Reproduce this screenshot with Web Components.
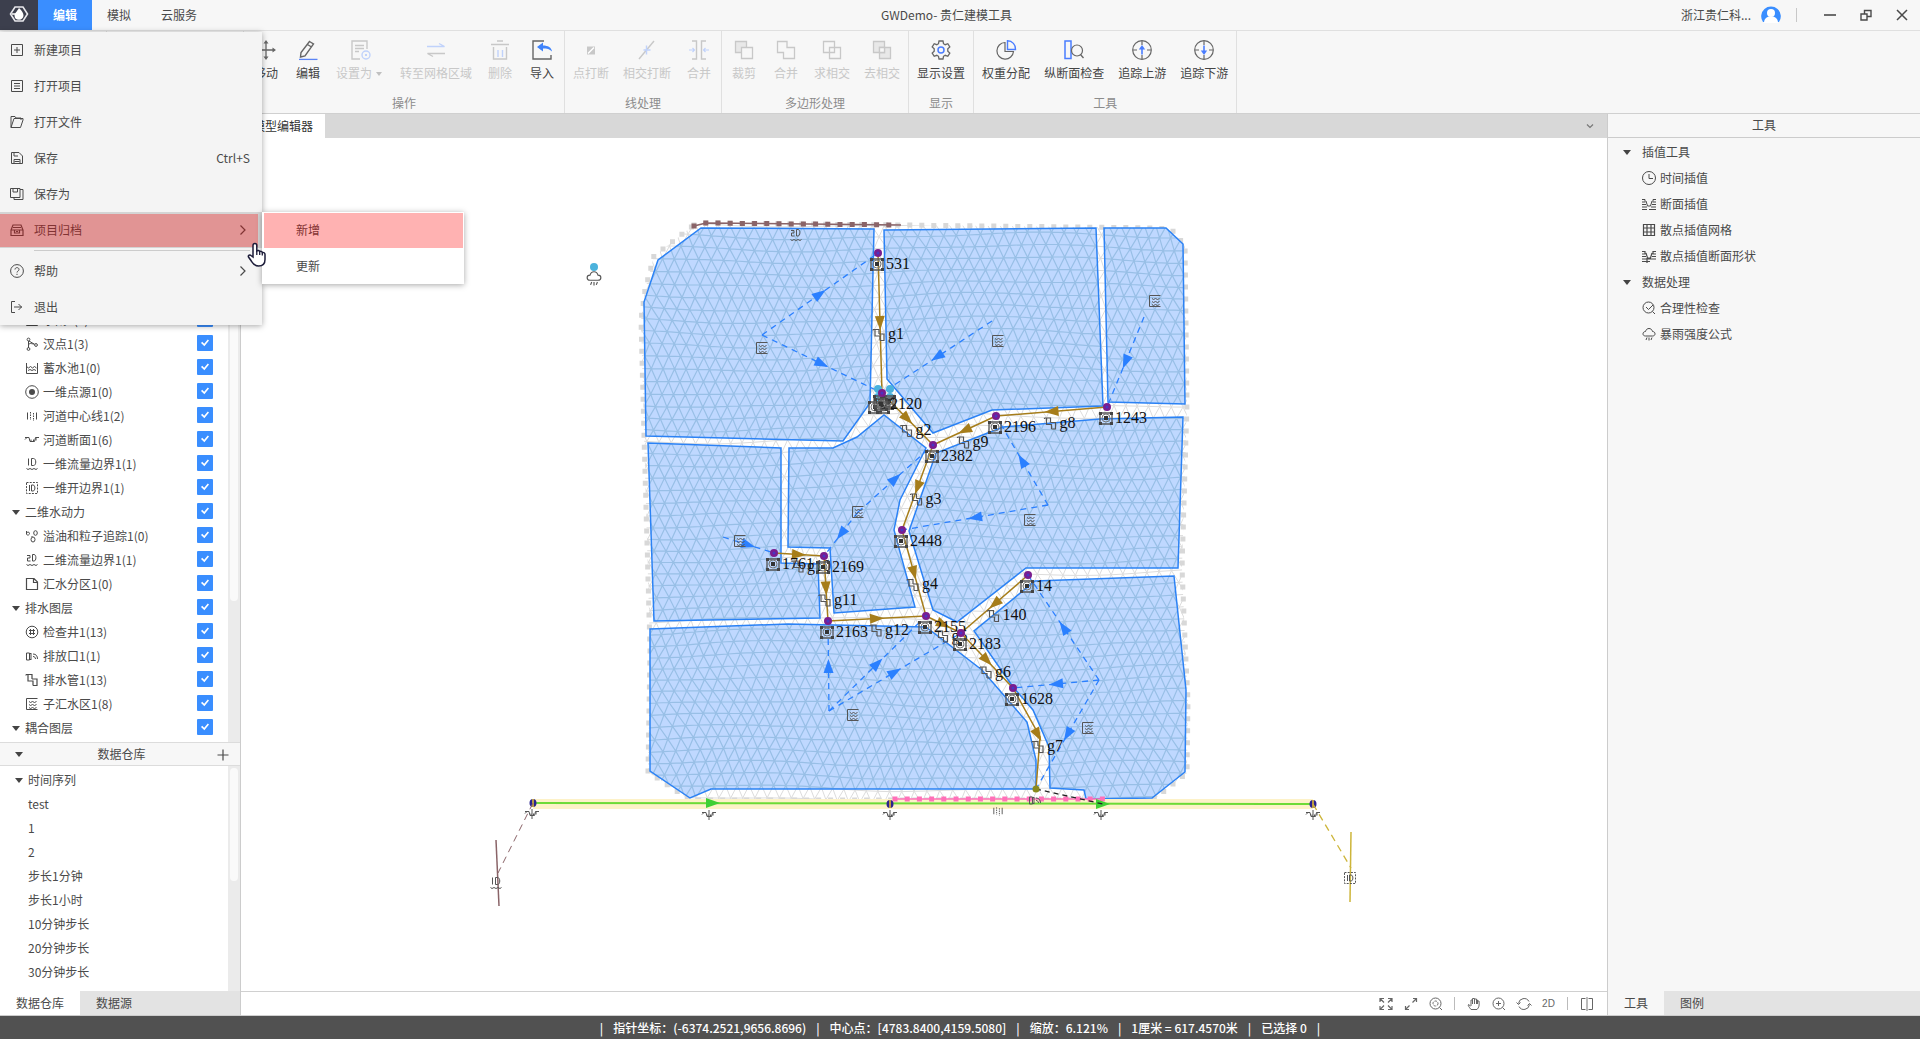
<!DOCTYPE html>
<html lang="zh-CN">
<head>
<meta charset="utf-8">
<title>GWDemo- 贵仁建模工具</title>
<style>
  html, body {
    height: 100%;
    margin: 0;
  }

  body {
    font: 12px/16px "Noto Sans CJK SC", sans-serif;
    color: #4a4a4a;
    overflow: hidden;
  }
</style>
</head>
<body>
<gw-app></gw-app>

<script>
// ---------- icons ----------

// Inner markup of every icon, drawn on a square view box of the given size
const ICONS = {
  logo: [20, '<path d="M6 3h8l4.500 7-4.500 7H6L1.500 10z" stroke="#e8e8ec" stroke-width="1.600"/><path d="M10 4c3 3 4.500 5 4.500 7.500a4.300 4.300 0 0 1-4.500 4.300 4.500 4.500 0 0 1-4.500-4.300C5.500 9.500 8 7.500 10 4z" fill="#fff" stroke="none"/><path d="M3 10h5l2 3" stroke="#fff" stroke-width="1.500"/>'],
  user: [20, '<path d="M2 17A9.800 9.800 0 1 1 18 17z" fill="#3a8eff" stroke="none"/><circle cx="10" cy="8" r="4" fill="#fff" stroke="none"/><path d="M3 18c0-4 2.500-6 5-6.500h4c2.500.5 5 2.500 5 6.500z" fill="#fff" stroke="none"/>'],
  min: [14, '<path d="M1 7h12" stroke-width="1.600"/>'],
  restore: [14, '<path d="M2 6h6v6H2zM5.500 6V2.500H12v6H8" stroke-width="1.400"/>'],
  close: [14, '<path d="M2 2l10 10M12 2L2 12" stroke-width="1.500"/>'],

  move: [20, '<path d="M10 2v16M2 10h16" stroke-width="1.300"/><path d="M10 0l2.500 3.500h-5zM10 20l-2.500-3.500h5zM0 10l3.500-2.500v5zM20 10l-3.500 2.500v-5z" fill="currentColor" stroke="none"/>'],
  edit: [20, '<path d="M11.500 1.500l4 2.500L7 16l-4.500 1 .5-4.500zM9.500 4.500l4 2.500" stroke-width="1.400"/><path d="M1 19.400h18.500" stroke="#5b84f5" stroke-width="1.300"/>'],
  setas: [20, '<path d="M16 9V1H1v18h8M4 5.500h9M4 8.500h9M4 11.500h4" stroke-width="1.400"/><circle cx="15" cy="15" r="4" stroke="#c0d2fb" stroke-width="1.400"/><path d="M15 14v2" stroke="#c0d2fb" stroke-width="2"/>'],
  swap: [20, '<path d="M1 6.500h17.500L13 3.500" stroke="#c0d2fb" stroke-width="1.400"/><path d="M19 13.500H1.500L7 16.500" stroke-width="1.400"/>'],
  trash: [20, '<path d="M1 4.500h18M7 1h6M3.500 7v12h13V7" stroke-width="1.400"/><path d="M8 10v7M12.500 10v7" stroke="#c0d2fb" stroke-width="1.400"/>'],
  import: [20, '<path d="M12 1H1v18h18v-4" stroke-width="1.400"/><path d="M11 2.500L5 7l6 4.500V8.500c4 0 6.500.5 9 3-.5-4-4-6-9-6z" fill="#3f83fb" stroke="none"/>'],
  breakpt: [20, '<path d="M6 6.500h8v8H6z" fill="currentColor" stroke="none"/><path d="M7 13.500l6-6" stroke="#fff" stroke-width="1.500"/>'],
  breakx: [20, '<path d="M2 19L17 1" stroke-width="1.400"/><path d="M9.500 5.500v9M6.500 10h7" stroke="#c0d2fb" stroke-width="1.400"/>'],
  merge: [20, '<path d="M3 1h4.500v18H3M17 1h-4.500v18H17" stroke-width="1.400"/><path d="M0 10h5.500M3.500 8l2 2-2 2M20 10h-5.500M16.500 8l-2 2 2 2" stroke="#c0d2fb" stroke-width="1.200"/>'],
  cut: [20, '<path d="M1.500 1.500h11v11h-11z" fill="#e8e8e8" stroke-width="1.300"/><path d="M7.500 7.500h11v11h-11z" fill="#f7f7f7" stroke-width="1.300"/>'],
  union: [20, '<path d="M1.500 1.500h9.500v6h7.500v11H7.500v-6h-6z" stroke-width="1.300"/>'],
  intersect: [20, '<path d="M1.500 1.500h11v11h-11zM7.500 7.500h11v11h-11z" stroke-width="1.300"/>'],
  subtract: [20, '<path d="M1.500 1.500h11v11h-11zM7.500 7.500h11v11h-11z" fill="#e8e8e8" stroke-width="1.300"/><path d="M7.500 7.500h5v5h-5z" fill="#f7f7f7" stroke-width="1.300"/>'],
  gear: [20, '<path d="M8 1h4l.5 2.700 1.700 1 2.600-1 2 3.300-2 1.800v2.400l2 1.800-2 3.300-2.600-1-1.700 1L12 19H8l-.5-2.700-1.700-1-2.600 1-2-3.300 2-1.800V8.800l-2-1.800 2-3.300 2.600 1 1.700-1z" stroke-width="1.300"/><circle cx="10" cy="10" r="3" stroke="#4a7dff" stroke-width="1.500"/>'],
  pie: [20, '<path d="M9 2.500A8.300 8.300 0 1 0 17.500 11.500H9z" stroke-width="1.200"/><path d="M11.500.8v8.700h8A8 8 0 0 0 11.500.8z" stroke="#4a7dff" stroke-width="1.400"/>'],
  section: [20, '<path d="M1 1h6v17.500H1z" stroke="#4a7dff" stroke-width="1.500"/><circle cx="13" cy="10.500" r="5.500" stroke-width="1.200"/><path d="M16.500 14.500L19.500 18" stroke-width="1.300"/>'],
  up: [20, '<circle cx="10" cy="10" r="9.300" stroke-width="1.200"/><path d="M10 1v4M10 15v4M1 10h4M15 10h4" stroke-width="1.200"/><path d="M10 14.500V7" stroke="#4a7dff" stroke-width="1.600"/><path d="M10 5l3.200 4.500H6.800z" fill="#4a7dff" stroke="none"/>'],
  down: [20, '<circle cx="10" cy="10" r="9.300" stroke-width="1.200"/><path d="M10 1v4M10 15v4M1 10h4M15 10h4" stroke-width="1.200"/><path d="M10 5.500V13" stroke="#4a7dff" stroke-width="1.600"/><path d="M10 15l3.200-4.500H6.800z" fill="#4a7dff" stroke="none"/>'],

  add: [14, '<path d="M1.500 1.500h11v11h-11zM7 4v6M4 7h6"/>'],
  list: [14, '<path d="M1.500 1.500h11v11h-11zM4 4.500h6M4 7h6M4 9.500h6"/>'],
  folder: [14, '<path d="M1 12.500V1.500h4l1 1.500h5v2M1 12.500h9.500L13 5V3.500H4L1 12.500"/>'],
  save: [14, '<path d="M1.500 1.500H9l3.500 3.500v7.500h-11zM4 1.500V5h4M4 12.500V8.500h6v4M4.500 10.500h5"/>'],
  saveas: [14, '<path d="M.5 1.500h9.500v9H.5zM3 1.500V5h4.500V1.500M10 2.500h3v10H4v-2"/>'],
  archive: [14, '<path d="M1 12.500V7l2-5h8l2 5v5.500zM1 7h12M3 4.500h8M4.500 7v3h5V7M6 8.500h2" stroke-width="1.200"/>'],
  help: [14, '<circle cx="7" cy="7" r="6.400"/><path d="M5 5.500C5 3 9 3 9 5.500 9 7 7 7 7 8.500M7 9.800v1.200"/>'],
  exit: [14, '<path d="M5 1.500H1.500v11H5M4 7h8M8.500 4l3 3-3 3"/>'],
  right: [14, '<path d="M4.500 2.500L9 7l-4.500 4.500" stroke-width="1.200"/>'],
  chevron: [14, '<path d="M4 5.500l3 3 3-3" stroke-width="1.200"/>'],
  plus: [14, '<path d="M7 1.500v11M1.500 7h11" stroke-width="1.200"/>'],

  branch: [14, '<path d="M3.500 4v7M3.500 9c0-4 3-2 6-2M4 4l5 3"/><circle cx="3.500" cy="2.500" r="1.400"/><circle cx="3.500" cy="12" r="1.400"/><circle cx="11" cy="8" r="1.400"/>'],
  pool: [14, '<path d="M1.500 2v10.500h11V2M1.500 5.500l2 1.500 2-1.500 2 1.500 2-1.500 2 1.500M3 9.500l2-1 2 1 2-1 2 1"/>'],
  source: [14, '<circle cx="7" cy="7" r="6.300"/><circle cx="7" cy="7" r="3" fill="currentColor" stroke="none"/>'],
  centre: [14, '<path d="M2.500 3.500v7M11.500 3.500v7"/><path d="M5.500 3v8M8.500 4v8" stroke-dasharray="1.500 1"/>'],
  cross: [14, '<path d="M0 6.500L2 4.500h2l1 4h4.500l1-4H13M0 4.500h2M11 7.500v-3M14 4.500h-2M6 6.500v2M8.500 6.500v2"/>'],
  flow1: [14, '<path d="M3.500 1.500v7M6.500 1.500h2c3 0 3 7 0 7h-2zM1.500 11.500l1.500 1 2-1 2 1 2-1 2 1 1.500-1"/>'],
  open1: [14, '<path d="M1.500 1.500h11v11h-11z" stroke-dasharray="2 1.200"/><path d="M4.500 4v6M6.500 4h1.500c2.500 0 2.500 6 0 6H6.500z"/>'],
  oil: [14, '<path d="M1.500 2v3c0 1.500 3 1.500 3-.5S2 3 1.500 4"/><ellipse cx="10.500" cy="4" rx="1.800" ry="2.300"/><ellipse cx="8" cy="10.500" rx="2" ry="2.500"/><path d="M6.500 8l1-1"/>'],
  flow2: [14, '<path d="M2 2.500h3v2.500H2.500v3H5.500M7.500 1.500h1.500c2.500 0 2.500 6.500 0 6.500H7.500zM1.500 11.500l1.500 1 2-1 2 1 2-1 2 1 1.500-1"/>'],
  page: [14, '<path d="M1.500 1.500h7.500L12.500 5v7.500h-11zM8.500 1.500V5.500h4" stroke-width="1.200"/>'],
  well: [14, '<circle cx="7" cy="7" r="5.800"/><path d="M5.500 4v6M8.500 4v6M4 5.500h6M4 8.500h6"/>'],
  outlet: [14, '<path d="M1.500 4h3v7h-3zM4.500 5.500l1.500-1.500v7L4.500 9.500M8 5c3 0 4.500 2 4.500 5M8 7.500c1.500 0 2.500 1 2.500 2.500"/>'],
  pipe: [14, '<path d="M1 1.500h6V6M3 1.500v6.500h5v4.500M7 6h5v6.500H8M1 1.500v1" stroke-width="1.200"/>'],
  catchment: [14, '<path d="M12.500 1.500h-11v11h11M4 4.500l1.500 1 2-1 2 1 2-1M4 7.500l1.500 1 2-1 2 1 2-1M4 10.500l1.500 1 2-1 2 1 2-1"/>'],

  clock: [14, '<circle cx="7" cy="7" r="6.500"/><path d="M7 3v4.500h4"/>'],
  profile: [14, '<path d="M0 2.500h3v2M14 2.500h-3v2M0 5h3.500M0 7.500h4M0 10h5M14 5h-3.500M14 7.500h-4M14 10H9M4 4l1.500 5h3L10 4M0 12.500h5M7 12.500h7"/>'],
  grid: [14, '<path d="M1.500 1.500h11v11h-11zM5 1.500v11M9 1.500v11M1.500 5h11M1.500 9h11" stroke-width="1.200"/>'],
  shape: [14, '<path d="M0 2.500h3v2M14 2.500h-3v2M0 5h3.500M0 7.500h4M0 10h14M14 5h-3.500M14 7.500h-4M4 4l1.500 5h3L10 4M0 12.500h8M5 9v5" stroke-width="1.200"/>'],
  check: [14, '<circle cx="6.500" cy="6.500" r="5.500"/><path d="M4 6l2.500 2.500L11 4M10.500 10.500L13 13"/>'],
  rain: [14, '<path d="M3.500 9C1.800 9 1 8 1 6.800S2 4.500 3.500 4.500C4 2.500 5.300 1.500 7 1.500s3 1 3.500 3c1.500 0 2.500 1 2.500 2.300S12.200 9 10.500 9zM5 10.500L4 13M7 10.500v3M10 10.500L9 13"/>'],

  full: [14, '<path d="M1 5V1.500h4M9 1.500h4V5M13 9v3.500H9M5 12.500H1V9M1.500 2L5 5.500M12.500 2L9 5.500M12.500 12L9 8.500M1.500 12L5 8.500" stroke-width="1.200"/>'],
  extent: [14, '<path d="M9 1.500h3.500V5M12.500 1.500L8.500 5.500M1.500 9v3.500H5M1.500 12.500l4-4" stroke-width="1.200"/>'],
  zoomall: [14, '<circle cx="6.500" cy="6.500" r="5.500"/><circle cx="6.500" cy="6.500" r="2.500" stroke-dasharray="2.500 1"/><path d="M10.500 10.500L13 13"/>'],
  hand: [14, '<path d="M3.500 9L1.500 7.500C.5 8 2 10 4 12.500h6c2-2 2.500-4 2-8.500h-1.500v3M4 9V3h1.500v4M5.500 3V1.500H7.500V7M7.500 2h2v5M9.500 3h1v4"/>'],
  zoomin: [14, '<circle cx="6.500" cy="6.500" r="5.500"/><path d="M6.500 4v5M4 6.500h5M10.500 10.500L13 13"/>'],
  refresh: [14, '<path d="M1.500 6.500a5.600 5.600 0 0 1 10.500-2M12.500 7.500a5.600 5.600 0 0 1-10.500 2M-.5 5.500l2 2 2-2M10.500 8.500l2-2 2 2"/>'],
  split: [14, '<path d="M5.500 1.500h-4v11h4M8.500 1.500h4v11h-4"/><path d="M7 0v14" stroke="#bbb" stroke-width="2"/>']
};

class GwIcon extends HTMLElement {
  constructor() {
    super();
    this.attachShadow({ mode: 'open' });
  }

  connectedCallback() {
    const [box, body] = ICONS[this.getAttribute('name')];
    const size = this.getAttribute('size') || box;

    this.shadowRoot.innerHTML = /*html*/`
      <style>
        :host { display: inline-flex; flex: none; }
        svg { display: block; overflow: visible; }
      </style>
      <svg width="${size}" height="${size}" viewBox="0 0 ${box} ${box}" fill="none" stroke="currentColor" stroke-width="1" aria-hidden="true">${body}</svg>
    `;
  }
}

customElements.define('gw-icon', GwIcon);

// ---------- title bar ----------

class GwTitleBar extends HTMLElement {
  constructor() {
    super();
    this.attachShadow({ mode: 'open' });
    this.shadowRoot.innerHTML = /*html*/`
      <style>
        :host {
          display: flex;
          height: 30px;
          background: #f7f7f7;
          border-bottom: 1px solid #e0e0e0;
        }
        button {
          font: inherit;
          color: inherit;
          background: none;
          border: 0;
          padding: 0 15px;
        }
        nav { display: flex; }
        .logo { width: 38px; padding: 0 9px; background: #3c3f4d; }
        .active { color: #fff; font-weight: 700; background: #3a8eff; }
        h1 {
          flex: 1;
          margin: 0;
          font: inherit;
          line-height: 30px;
          text-align: center;
        }
        .account { display: flex; align-items: center; gap: 10px; padding-right: 15px; }
        .account::after { content: ""; width: 1px; height: 14px; margin-left: 5px; background: #c8c8c8; }
        .win { display: flex; }
        .win button { display: grid; place-items: center; width: 36px; padding: 0; }
      </style>
      <nav>
        <button class="logo" aria-label="菜单"><gw-icon name="logo"></gw-icon></button>
        <button class="active">编辑</button>
        <button>模拟</button>
        <button>云服务</button>
      </nav>
      <h1>GWDemo- 贵仁建模工具</h1>
      <div class="account"><span>浙江贵仁科...</span><gw-icon name="user"></gw-icon></div>
      <div class="win">
        <button aria-label="最小化"><gw-icon name="min"></gw-icon></button>
        <button aria-label="还原"><gw-icon name="restore"></gw-icon></button>
        <button aria-label="关闭"><gw-icon name="close"></gw-icon></button>
      </div>
    `;
  }
}

customElements.define('gw-title-bar', GwTitleBar);

// ---------- ribbon ----------

class RibbonGroup extends HTMLElement {
  constructor() {
    super();
    this.attachShadow({ mode: 'open' });
    this.shadowRoot.innerHTML = /*html*/`
      <style>
        :host {
          display: flex;
          flex-direction: column;
          justify-content: space-between;
          box-sizing: border-box;
          padding: 9px 1px 2px;
          border-right: 1px solid #e0e0e0;
        }
        .items { display: flex; }
        .label { color: #8c8c8c; text-align: center; }
      </style>
      <div class="items"><slot></slot></div>
      <div class="label">${this.getAttribute('label') || ''}</div>
    `;
  }
}

customElements.define('ribbon-group', RibbonGroup);

class RibbonButton extends HTMLElement {
  constructor() {
    super();
    const off = this.hasAttribute('off');

    this.attachShadow({ mode: 'open' });
    this.shadowRoot.innerHTML = /*html*/`
      <style>
        :host { display: block; }
        button {
          display: flex;
          flex-direction: column;
          align-items: center;
          gap: 5px;
          min-width: 42px;
          padding: 0 7px;
          font: inherit;
          color: #444;
          background: none;
          border: 0;
          white-space: nowrap;
        }
        gw-icon { color: #666; }
        button:disabled, button:disabled gw-icon { color: #c8c8c8; }
        .drop::after {
          content: "";
          display: inline-block;
          margin: 0 4px 2px;
          border: 3px solid transparent;
          border-top: 4px solid #c0c0c0;
          border-bottom: 0;
        }
      </style>
      <button ${off ? 'disabled' : ''}>
        <gw-icon name="${this.getAttribute('icon')}"></gw-icon>
        <span class="${this.hasAttribute('drop') ? 'drop' : ''}"><slot></slot></span>
      </button>
    `;
  }
}

customElements.define('ribbon-button', RibbonButton);

// ---------- application menu ----------

class MenuItem extends HTMLElement {
  constructor() {
    super();
    const icon = this.getAttribute('icon');
    const key = this.getAttribute('key');

    this.attachShadow({ mode: 'open' });
    this.shadowRoot.innerHTML = /*html*/`
      <style>
        :host { display: block; position: relative; }
        button {
          display: flex;
          align-items: center;
          gap: 10px;
          width: 100%;
          height: 36px;
          padding: 0 12px 0 10px;
          font: inherit;
          color: inherit;
          text-align: left;
          background: none;
          border: 0;
        }
        :host(:not([icon])) button { padding-left: 34px; }
        .text { flex: 1; }
        :host([open]) button { background: #d4d4d4; }
        :host([marked])::after {
          content: "";
          position: absolute;
          inset: 1px 1px 0 2px;
          background: rgba(255, 0, 0, .3);
          pointer-events: none;
        }
        :host([open])::after { inset: 2px 4px 1px 0; }
      </style>
      <button>
        ${icon ? `<gw-icon name="${icon}"></gw-icon>` : ''}
        <span class="text"><slot></slot></span>
        ${key ? `<kbd style="font: inherit">${key}</kbd>` : ''}
        ${this.hasAttribute('more') ? '<gw-icon name="right"></gw-icon>' : ''}
      </button>
      <slot name="sub"></slot>
    `;
  }
}

customElements.define('menu-item', MenuItem);

class AppMenu extends HTMLElement {
  constructor() {
    super();
    this.attachShadow({ mode: 'open' });
    this.shadowRoot.innerHTML = /*html*/`
      <style>
        :host {
          display: block;
          width: 262px;
          background: #f4f4f4;
          box-shadow: 0 1px 6px rgba(0, 0, 0, .35);
        }
        hr { margin: 2px 12px 2px 34px; border: 0; border-top: 1px solid #ccc; }
        .sub {
          position: absolute;
          left: 100%;
          top: 0;
          width: 202px;
          background: #fff;
          box-shadow: 0 1px 6px rgba(0, 0, 0, .35);
        }
        .cursor { position: absolute; left: 247px; top: 210px; }
      </style>
      <menu-item icon="add">新建项目</menu-item>
      <menu-item icon="list">打开项目</menu-item>
      <menu-item icon="folder">打开文件</menu-item>
      <menu-item icon="save" key="Ctrl+S">保存</menu-item>
      <menu-item icon="saveas">保存为</menu-item>
      <menu-item icon="archive" more open marked>项目归档
        <div class="sub" slot="sub">
          <menu-item marked>新增</menu-item>
          <menu-item>更新</menu-item>
        </div>
      </menu-item>
      <hr>
      <menu-item icon="help" more>帮助</menu-item>
      <menu-item icon="exit">退出</menu-item>
      <svg class="cursor" width="20" height="26" viewBox="0 0 20 26" aria-hidden="true">
        <path d="M6 15V3.500a1.900 1.900 0 0 1 3.800 0V9c1-.8 2.500-.5 2.900.6 1-.6 2.300-.2 2.600.9 1.400-.4 2.700.4 2.700 2v5c0 4-2.500 6.500-6.500 6.500-4.500 0-5.500-2.500-7.500-5.500l-2.500-3.500c-.7-1.500 1.300-2.700 2.500-1.500z" fill="#fff" stroke="#1d1d3a" stroke-width="1.500"/>
        <path d="M9.800 9v4M12.700 9.600V13M15.300 10.500V13.500" stroke="#1d1d3a" stroke-width="1.300"/>
      </svg>
    `;
  }
}

customElements.define('app-menu', AppMenu);

// ---------- trees and panes ----------

class TreeRow extends HTMLElement {
  constructor() {
    super();
    const icon = this.getAttribute('icon');
    const group = this.hasAttribute('group');
    const check = this.hasAttribute('check');
    const tag = check ? 'label' : 'div';

    this.attachShadow({ mode: 'open' });
    this.shadowRoot.innerHTML = /*html*/`
      <style>
        :host { display: block; white-space: nowrap; }
        .row {
          display: flex;
          align-items: center;
          height: var(--row, 24px);
          padding-left: var(--indent, 25px);
          gap: 4px;
        }
        :host([group]) .row { padding-left: var(--fold, 12px); gap: var(--fold-gap, 5px); }
        .fold { border: 4px solid transparent; border-top: 5px solid #444; border-bottom: 0; }
        .text { flex: 1; }
        input {
          appearance: none;
          display: grid;
          place-items: center;
          width: 16px;
          height: 16px;
          margin: 0 27px 2px 0;
          background: #3a8eff;
          border-radius: 1px;
        }
        input::before {
          content: "";
          width: 8px;
          height: 8px;
          background: #fff;
          clip-path: polygon(0 50%, 15% 35%, 40% 58%, 85% 5%, 100% 20%, 42% 92%);
        }
      </style>
      <${tag} class="row">
        ${group ? '<span class="fold"></span>' : ''}
        ${icon ? `<gw-icon name="${icon}"></gw-icon>` : ''}
        <span class="text"><slot></slot></span>
        ${check ? '<input type="checkbox" checked>' : ''}
      </${tag}>
    `;
  }
}

customElements.define('tree-row', TreeRow);

// Row of tabs under a side panel
class PaneTabs extends HTMLElement {
  constructor() {
    super();
    const [active, other] = this.getAttribute('tabs').split(',');

    this.attachShadow({ mode: 'open' });
    this.shadowRoot.innerHTML = /*html*/`
      <style>
        :host { display: flex; height: 24px; background: #e3e3e3; border-bottom: 1px solid #ccc; }
        button { padding: 0 16px; font: inherit; color: inherit; background: none; border: 0; }
        .active { background: var(--tab, #fff); }
      </style>
      <button class="active">${active}</button>
      <button>${other}</button>
    `;
  }
}

customElements.define('pane-tabs', PaneTabs);

class LeftPanel extends HTMLElement {
  constructor() {
    super();
    this.attachShadow({ mode: 'open' });
    this.shadowRoot.innerHTML = /*html*/`
      <style>
        :host {
          display: flex;
          flex-direction: column;
          width: 240px;
          background: #fff;
          border-right: 1px solid #ccc;
        }
        .scroll { display: flex; min-height: 0; overflow: hidden; }
        .rows { flex: 1; min-width: 0; }
        .layers { flex: 1; }
        .layers .rows { display: flex; flex-direction: column; justify-content: flex-end; padding-bottom: 2px; margin-right: -12px; }
        .store { height: 225px; }
        .store .rows { padding-top: 2px; --indent: 28px; --fold: 15px; }
        .track { width: 12px; background: #ebebeb; z-index: 1; }
        .track i { display: block; width: 8px; height: 113px; margin: 2px; border-radius: 4px; background: #fafafa; }
        .layers .track i { height: 485px; }
        header {
          display: flex;
          align-items: center;
          height: 22px;
          padding: 0 10px 0 15px;
          background: #f7f7f7;
          border: solid #dcdcdc;
          border-width: 1px 0;
        }
        header .fold { border: 4px solid transparent; border-top: 5px solid #444; border-bottom: 0; }
        h2 { flex: 1; margin: 0; padding-left: 4px; font: inherit; text-align: center; }
        header button { padding: 0; color: inherit; background: none; border: 0; }
        header gw-icon { vertical-align: middle; }
      </style>
      <div class="scroll layers">
        <div class="rows">
          <tree-row check icon="pool">水闸1(0)</tree-row>
          <tree-row check icon="branch">汊点1(3)</tree-row>
          <tree-row check icon="pool">蓄水池1(0)</tree-row>
          <tree-row check icon="source">一维点源1(0)</tree-row>
          <tree-row check icon="centre">河道中心线1(2)</tree-row>
          <tree-row check icon="cross">河道断面1(6)</tree-row>
          <tree-row check icon="flow1">一维流量边界1(1)</tree-row>
          <tree-row check icon="open1">一维开边界1(1)</tree-row>
          <tree-row check group>二维水动力</tree-row>
          <tree-row check icon="oil">溢油和粒子追踪1(0)</tree-row>
          <tree-row check icon="flow2">二维流量边界1(1)</tree-row>
          <tree-row check icon="page">汇水分区1(0)</tree-row>
          <tree-row check group>排水图层</tree-row>
          <tree-row check icon="well">检查井1(13)</tree-row>
          <tree-row check icon="outlet">排放口1(1)</tree-row>
          <tree-row check icon="pipe">排水管1(13)</tree-row>
          <tree-row check icon="catchment">子汇水区1(8)</tree-row>
          <tree-row check group>耦合图层</tree-row>
        </div>
        <div class="track"><i></i></div>
      </div>
      <header>
        <span class="fold"></span>
        <h2>数据仓库</h2>
        <button aria-label="添加"><gw-icon name="plus"></gw-icon></button>
      </header>
      <div class="scroll store">
        <div class="rows">
          <tree-row group>时间序列</tree-row>
          <tree-row>test</tree-row>
          <tree-row>1</tree-row>
          <tree-row>2</tree-row>
          <tree-row>步长1分钟</tree-row>
          <tree-row>步长1小时</tree-row>
          <tree-row>10分钟步长</tree-row>
          <tree-row>20分钟步长</tree-row>
          <tree-row>30分钟步长</tree-row>
        </div>
        <div class="track"><i></i></div>
      </div>
      <pane-tabs tabs="数据仓库,数据源"></pane-tabs>
    `;
  }
}

customElements.define('left-panel', LeftPanel);

class ToolPanel extends HTMLElement {
  constructor() {
    super();
    this.attachShadow({ mode: 'open' });
    this.shadowRoot.innerHTML = /*html*/`
      <style>
        :host {
          display: flex;
          flex-direction: column;
          width: 312px;
          background: #f7f7f7;
          border-left: 1px solid #ccc;
        }
        h2 {
          margin: 0;
          padding-bottom: 1px;
          font: inherit;
          line-height: 22px;
          text-align: center;
          border-bottom: 1px solid #ccc;
        }
        .rows {
          flex: 1;
          padding-top: 1px;
          --row: 26px;
          --indent: 34px;
          --fold: 15px;
          --fold-gap: 11px;
        }
        pane-tabs { --tab: #f7f7f7; }
      </style>
      <h2>工具</h2>
      <div class="rows">
        <tree-row group>插值工具</tree-row>
        <tree-row icon="clock">时间插值</tree-row>
        <tree-row icon="profile">断面插值</tree-row>
        <tree-row icon="grid">散点插值网格</tree-row>
        <tree-row icon="shape">散点插值断面形状</tree-row>
        <tree-row group>数据处理</tree-row>
        <tree-row icon="check">合理性检查</tree-row>
        <tree-row icon="rain">暴雨强度公式</tree-row>
      </div>
      <pane-tabs tabs="工具,图例"></pane-tabs>
    `;
  }
}

customElements.define('tool-panel', ToolPanel);

// ---------- map ----------

// Mesh outline and the subcatchments inside it
const OUTLINE = [[694, 225], [706, 223], [901, 225], [1158, 228], [1172, 230], [1185, 246], [1187, 405], [1182, 568], [1185, 640], [1188, 700], [1187, 773], [1153, 800], [690, 800], [648, 772], [650, 650], [644, 435], [641, 320], [645, 290], [654, 256]];

const CATCHMENTS = [
  [[701, 228], [874, 229], [870, 403], [843, 441], [646, 436], [644, 302], [658, 260]],
  [[884, 230], [1096, 228], [1103, 406], [992, 410], [933, 433], [887, 379]],
  [[1104, 228], [1166, 228], [1183, 244], [1185, 404], [1108, 402]],
  [[1183, 417], [1100, 419], [1003, 427], [980, 436], [936, 453], [909, 531], [933, 610], [957, 622], [1026, 568], [1178, 568]],
  [[789, 448], [833, 448], [857, 437], [884, 415], [926, 448], [900, 500], [894, 530], [915, 607], [834, 613], [830, 548], [788, 547]],
  [[648, 443], [781, 448], [781, 563], [818, 564], [820, 618], [654, 621]],
  [[650, 629], [788, 624], [926, 627], [982, 670], [1027, 722], [1036, 760], [1036, 789], [711, 789], [690, 798], [650, 771]],
  [[1174, 576], [1186, 690], [1185, 772], [1152, 798], [1086, 799], [1084, 790], [1050, 788], [1049, 747], [1033, 710], [1013, 687], [974, 631], [1035, 581]]
];

const NODES = {
  531: [878, 253], 2120: [882, 393], 2382: [933, 445], 2196: [996, 416], 1243: [1107, 407],
  2448: [902, 530], 1761: [774, 553], 2169: [824, 556], 2163: [828, 621], 2155: [926, 616],
  2183: [961, 633], 14: [1028, 575], 1628: [1013, 688]
};

const OUTFALL = [1036, 789];

const PIPES = [
  ['g1', 531, 2120], ['g2', 2120, 2382], ['g9', 2196, 2382], ['g8', 1243, 2196], ['g3', 2382, 2448],
  ['g4', 2448, 2155], ['g10', 1761, 2169], ['g11', 2169, 2163], ['g12', 2163, 2155],
  ['g5', 2155, 2183], ['140', 14, 2183], ['g6', 2183, 1628]
];

// Runoff links: from a subcatchment centre to where it drains
const RUNOFF = [
  [[762, 335], NODES[531]], [[762, 335], NODES[2120]], [[992, 321], NODES[2120]],
  [[1144, 317], NODES[1243]], [[1048, 505], NODES[2196]], [[1048, 505], NODES[2448]],
  [[858, 512], NODES[2382]], [[858, 512], NODES[2169]], [[723, 537], NODES[1761]],
  [[829, 711], NODES[2163]], [[829, 711], NODES[2155]], [[829, 711], NODES[2183]],
  [[1099, 680], NODES[14]], [[1099, 680], NODES[1628]], [[1099, 680], OUTFALL]
];

const CATCHMENT_ICONS = [[762, 348], [998, 341], [1155, 301], [858, 512], [1030, 520], [740, 541], [853, 715], [1088, 728]];

const path = (points) => 'M' + points.map((p) => p.join(' ')).join('L');
const mid = ([ax, ay], [bx, by]) => [(ax + bx) / 2, (ay + by) / 2];

function symbol(name, [x, y], size = 14) {
  const [box, body] = ICONS[name];
  return `<svg x="${x - size / 2}" y="${y - size / 2}" width="${size}" height="${size}" viewBox="0 0 ${box} ${box}" fill="none" stroke="#555">${body}</svg>`;
}

function arrow([x, y], from, to, color) {
  const angle = Math.atan2(to[1] - from[1], to[0] - from[0]) * 180 / Math.PI;
  return `<path d="M7 0L-7 -5V5z" fill="${color}" transform="translate(${x} ${y}) rotate(${angle})"/>`;
}

function squares(points, step, color) {
  const out = [];
  let rest = 0;

  for (let i = 1; i < points.length; i++) {
    const [ax, ay] = points[i - 1];
    const [bx, by] = points[i];
    const length = Math.hypot(bx - ax, by - ay);
    let at = rest;

    for (; at <= length; at += step) {
      const x = ax + (bx - ax) * at / length;
      const y = ay + (by - ay) * at / length;
      out.push(`M${(x - 2.5).toFixed(1)} ${(y - 2.5).toFixed(1)}h5v5h-5z`);
    }
    rest = at - length;
  }
  return `<path d="${out.join('')}" fill="${color}"/>`;
}

// Triangles in staggered rows, bent a little so that the rows are not straight
function mesh() {
  const vertex = (col, row) => {
    const x = 630 + (col + (row % 2) / 2) * 12;
    const y = 212 + row * 12;
    return [
      (x + 3 * Math.sin(y / 31 + x / 83) + 1.5 * Math.sin(x / 27 + y / 23)).toFixed(1),
      (y + 3 * Math.sin(x / 67 + y / 120) + Math.sin(x / 29 - y / 19)).toFixed(1)
    ];
  };
  let d = '';

  for (let row = 0; row < 50; row++) {
    const across = [];
    const zigzag = [];
    for (let col = 0; col < 48; col++) {
      across.push(vertex(col, row));
      if (row % 2) {
        zigzag.push(vertex(col, row + 1), vertex(col, row));
      } else {
        zigzag.push(vertex(col, row), vertex(col, row + 1));
      }
    }
    d += path(across) + path(zigzag);
  }
  return d;
}

class MapCanvas extends HTMLElement {
  constructor() {
    super();
    this.attachShadow({ mode: 'open' });
    this.shadowRoot.innerHTML = /*html*/`
      <style>
        :host { display: block; min-height: 0; background: #fff; }
        svg { display: block; overflow: visible; }
        .view { width: 100%; height: 100%; overflow: hidden; }
        text { font: 16px "Liberation Serif", serif; fill: #111; }
      </style>
      <svg class="view" viewBox="241 138 1366 853" fill="none">
        <defs>
          <clipPath id="outline"><path d="${path(OUTLINE)}z"/></clipPath>
          <clipPath id="areas"><path d="${CATCHMENTS.map((c) => path(c) + 'z').join('')}"/></clipPath>
        </defs>
        ${this.drawMesh()}
        ${this.drawRiver()}
        ${this.drawRunoff()}
        ${this.drawPipes()}
        ${this.drawNodes()}
      </svg>
    `;
  }

  drawMesh() {
    const lines = mesh();
    const areas = CATCHMENTS.map((c) => path(c) + 'z').join('');

    return `
      <path d="${lines}" clip-path="url(#outline)" stroke="#dcdcdc"/>
      ${squares([...OUTLINE, OUTLINE[0]], 12, '#d8d8d8')}
      <path d="${areas}" fill="#bfd8ff"/>
      <path d="${lines}" clip-path="url(#areas)" stroke="#98bfe6" stroke-width="1.200"/>
      <path d="${areas}" stroke="#2b82f5" stroke-width="1.500"/>
      <path d="M694 226L706 223L901 225" stroke="#8a6468" stroke-width="1.500"/>
      ${squares([[694, 226], [706, 223], [901, 225]], 12.2, '#8a6468')}
      ${symbol('flow2', [796, 235])}
    `;
  }

  drawRiver() {
    const ends = [[533, 803], [890, 804], [1313, 804]];
    const sections = [[532, 814], [709, 815], [890, 815], [1101, 815], [1313, 815]];

    return `
      <path d="M533 804H1313" stroke="#fdf2c8" stroke-width="10"/>
      <path d="M533 803L1313 804" stroke="#6ddb37" stroke-width="2"/>
      <path d="M895 799H1103" stroke="#ff70b8" stroke-width="1.500"/>
      ${squares([[895, 799], [1104, 799]], 12.2, '#ff70b8')}
      ${arrow([713, 803], [533, 803], [890, 803], '#3fcf35')}
      ${arrow([1103, 804], [890, 804], [1313, 804], '#3fcf35')}
      ${ends.map(([x, y]) => `<ellipse cx="${x}" cy="${y}" rx="3.500" ry="4" fill="#2b2390"/><path d="M${x} ${y - 4}v8" stroke="#e8c22c" stroke-width="1.500"/>`).join('')}
      ${sections.map((at) => symbol('cross', at) + `<path d="M${at[0]} ${at[1] - 5}v10" stroke="#555"/>`).join('')}
      ${symbol('centre', [998, 811], 13)}
      ${symbol('outlet', [1035, 800], 14)}
      <path d="M1036 789L1103 804" stroke="#222" stroke-dasharray="5 4" stroke-width="1.300"/>
      <path d="M496 840L499 906" stroke="#8a6468" stroke-width="1.500"/>
      <path d="M533 803L498 873" stroke="#8a6468" stroke-dasharray="7 5"/>
      <path d="M1351 832L1350 902" stroke="#cdb53a" stroke-width="1.500"/>
      <path d="M1313 804L1351 868" stroke="#cdb53a" stroke-dasharray="7 5" stroke-width="1.300"/>
      ${symbol('flow1', [496, 883])}
      ${symbol('open1', [1350, 878])}
      <circle cx="594" cy="267" r="4" fill="#4bb2dc"/>
      ${symbol('rain', [594, 278], 16)}
    `;
  }

  drawRunoff() {
    const links = RUNOFF.map(([from, to]) => `
      <path d="${path([from, to])}" stroke="#2b80ff" stroke-width="1.300" stroke-dasharray="6 5"/>
      ${arrow(mid(from, to), from, to, '#2b80ff')}
    `);

    return links.join('') + CATCHMENT_ICONS.map((at) => symbol('catchment', at)).join('');
  }

  drawPipes() {
    const gold = '#a67d1a';
    const label = (name, [x, y]) => `${symbol('pipe', [x - 1, y + 12], 14)}<text x="${x + 8}" y="${y + 16}">${name}</text>`;
    const last = [[1013, 688], [1040, 737], [1039, 750], OUTFALL];

    return PIPES.map(([name, a, b]) => {
      const from = NODES[a];
      const to = NODES[b];
      const at = mid(from, to);
      return `<path d="${path([from, to])}" stroke="${gold}" stroke-width="1.500"/>${arrow(at, from, to, gold)}${label(name, at)}`;
    }).join('') + `
      <path d="${path(last)}" stroke="${gold}" stroke-width="1.500"/>
      ${arrow([1038, 735], last[0], last[1], gold)}
      ${label('g7', [1039, 735])}
      <circle cx="${OUTFALL[0]}" cy="${OUTFALL[1]}" r="3.500" fill="#8a8a1e"/>
    `;
  }

  drawNodes() {
    const box = ([x, y]) => `
      <path d="M${x - 6} ${y - 5}h12v11h-12z" stroke="#555" stroke-width="1.300"/>
      <circle cx="${x}" cy="${y}" r="4" stroke="#777"/>
      <path d="M${x - 2} ${y - 2}h4v4h-4z" fill="#333"/>
      <path d="M${x - 7} ${y - 6}h3v3h-3zM${x + 4} ${y - 6}h3v3h-3zM${x - 7} ${y + 4}h3v3h-3zM${x + 4} ${y + 4}h3v3h-3z" fill="#444"/>
    `;
    const rain = [[878, 389], [890, 389], [878, 397], [890, 397]];
    const stack = [[875, 407], [880, 401], [887, 403], [889, 401], [883, 407]];

    return `
      ${rain.map(([x, y]) => `<circle cx="${x}" cy="${y}" r="4" fill="#4bb2dc"/>`).join('')}
      ${stack.map(box).join('')}
      ${Object.entries(NODES).map(([name, [x, y]]) => `
        ${box([x - 1, y + 11])}
        <circle cx="${x}" cy="${y}" r="4" fill="#7a1d8f"/>
        <circle cx="${x}" cy="${y}" r="1.500" fill="#4a35c0"/>
        <text x="${x + 8}" y="${y + 16}">${name}</text>
      `).join('')}
    `;
  }
}

customElements.define('map-canvas', MapCanvas);

class MapToolbar extends HTMLElement {
  constructor() {
    super();
    this.attachShadow({ mode: 'open' });
    const tool = (name, title) => `<button aria-label="${title}"><gw-icon name="${name}"></gw-icon></button>`;

    this.shadowRoot.innerHTML = /*html*/`
      <style>
        :host {
          display: flex;
          justify-content: flex-end;
          align-items: center;
          height: 23px;
          padding-right: 8px;
          background: #fff;
          border: solid #d0d0d0;
          border-width: 1px 0;
        }
        button {
          display: grid;
          place-items: center;
          width: 25px;
          height: 22px;
          padding: 0;
          font: 10px "Liberation Sans", sans-serif;
          color: #666;
          background: none;
          border: 0;
        }
        i { width: 1px; height: 13px; margin: 0 6px; background: #bbb; }
      </style>
      ${tool('full', '全屏')}${tool('extent', '全图')}${tool('zoomall', '缩放至图层')}
      <i></i>
      ${tool('hand', '平移')}${tool('zoomin', '放大')}${tool('refresh', '刷新')}<button>2D</button>
      <i></i>
      ${tool('split', '分屏')}
    `;
  }
}

customElements.define('map-toolbar', MapToolbar);

// ---------- status bar ----------

class StatusBar extends HTMLElement {
  constructor() {
    super();
    this.attachShadow({ mode: 'open' });
    this.shadowRoot.innerHTML = /*html*/`
      <style>
        :host {
          display: flex;
          justify-content: center;
          gap: 10px;
          font-weight: 500;
          line-height: 23px;
          color: #fff;
          background: #515151;
          white-space: nowrap;
        }
      </style>
      <span>|</span>
      <span>指针坐标：(-6374.2521,9656.8696)</span>
      <span>|</span>
      <span>中心点：[4783.8400,4159.5080]</span>
      <span>|</span>
      <span>缩放：6.121%</span>
      <span>|</span>
      <span>1厘米 = 617.4570米</span>
      <span>|</span>
      <span>已选择 0</span>
      <span>|</span>
    `;
  }
}

customElements.define('status-bar', StatusBar);

// ---------- application shell ----------

class GwApp extends HTMLElement {
  constructor() {
    super();
    this.attachShadow({ mode: 'open' });
    this.shadowRoot.innerHTML = /*html*/`
      <style>
        :host { display: flex; flex-direction: column; height: 100vh; position: relative; }
        .ribbon {
          display: flex;
          height: 82px;
          background: #f7f7f7;
          border-bottom: 1px solid #d0d0d0;
        }
        .file { width: 107px; }
        .view { width: 137px; }
        .body { flex: 1; display: flex; min-height: 0; }
        left-panel, tool-panel { flex: none; }
        main { flex: 1; min-width: 0; display: flex; flex-direction: column; }
        main > map-canvas { flex: 1; }
        .tabs {
          display: flex;
          justify-content: space-between;
          align-items: center;
          height: 24px;
          padding-right: 10px;
          background: #d8d8d8;
        }
        .tabs button { height: 24px; padding: 0 12px; font: inherit; color: #333; background: #fff; border: 0; }
        .tabs gw-icon { color: #777; }
        app-menu { position: absolute; left: 0; top: 32px; z-index: 5; }
      </style>
      <gw-title-bar></gw-title-bar>
      <div class="ribbon">
        <ribbon-group class="file"></ribbon-group>
        <ribbon-group class="view"></ribbon-group>
        <ribbon-group label="操作">
          <ribbon-button icon="move">移动</ribbon-button>
          <ribbon-button icon="edit">编辑</ribbon-button>
          <ribbon-button icon="setas" off drop>设置为</ribbon-button>
          <ribbon-button icon="swap" off>转至网格区域</ribbon-button>
          <ribbon-button icon="trash" off>删除</ribbon-button>
          <ribbon-button icon="import">导入</ribbon-button>
        </ribbon-group>
        <ribbon-group label="线处理">
          <ribbon-button icon="breakpt" off>点打断</ribbon-button>
          <ribbon-button icon="breakx" off>相交打断</ribbon-button>
          <ribbon-button icon="merge" off>合并</ribbon-button>
        </ribbon-group>
        <ribbon-group label="多边形处理">
          <ribbon-button icon="cut" off>裁剪</ribbon-button>
          <ribbon-button icon="union" off>合并</ribbon-button>
          <ribbon-button icon="intersect" off>求相交</ribbon-button>
          <ribbon-button icon="subtract" off>去相交</ribbon-button>
        </ribbon-group>
        <ribbon-group label="显示">
          <ribbon-button icon="gear">显示设置</ribbon-button>
        </ribbon-group>
        <ribbon-group label="工具">
          <ribbon-button icon="pie">权重分配</ribbon-button>
          <ribbon-button icon="section">纵断面检查</ribbon-button>
          <ribbon-button icon="up">追踪上游</ribbon-button>
          <ribbon-button icon="down">追踪下游</ribbon-button>
        </ribbon-group>
      </div>
      <div class="body">
        <left-panel></left-panel>
        <main>
          <div class="tabs">
            <button>模型编辑器</button>
            <gw-icon name="chevron"></gw-icon>
          </div>
          <map-canvas></map-canvas>
          <map-toolbar></map-toolbar>
        </main>
        <tool-panel></tool-panel>
      </div>
      <status-bar></status-bar>
      <app-menu></app-menu>
    `;
  }
}

customElements.define('gw-app', GwApp);
</script>
</body>
</html>
